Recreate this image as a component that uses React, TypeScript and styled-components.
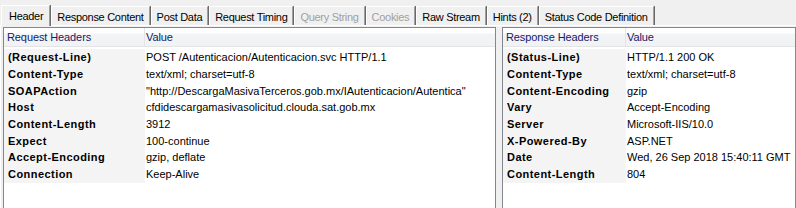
import styled, { createGlobalStyle } from "styled-components";

const GlobalStyle = createGlobalStyle`
  html, body { margin: 0; padding: 0; background: #f0f0f0; overflow: hidden; }
  body {
    font-family: "Liberation Sans", Arial, sans-serif;
    font-size: 11px;
    color: #000;
  }
`;

const tabs = [
  { label: "Header", active: true },
  { label: "Response Content" },
  { label: "Post Data" },
  { label: "Request Timing" },
  { label: "Query String", disabled: true },
  { label: "Cookies", disabled: true },
  { label: "Raw Stream" },
  { label: "Hints (2)" },
  { label: "Status Code Definition" },
];

const requestHeaders: [string, string][] = [
  ["(Request-Line)", "POST /Autenticacion/Autenticacion.svc HTTP/1.1"],
  ["Content-Type", "text/xml; charset=utf-8"],
  ["SOAPAction", "\"http://DescargaMasivaTerceros.gob.mx/IAutenticacion/Autentica\""],
  ["Host", "cfdidescargamasivasolicitud.clouda.sat.gob.mx"],
  ["Content-Length", "3912"],
  ["Expect", "100-continue"],
  ["Accept-Encoding", "gzip, deflate"],
  ["Connection", "Keep-Alive"],
];

const responseHeaders: [string, string][] = [
  ["(Status-Line)", "HTTP/1.1 200 OK"],
  ["Content-Type", "text/xml; charset=utf-8"],
  ["Content-Encoding", "gzip"],
  ["Vary", "Accept-Encoding"],
  ["Server", "Microsoft-IIS/10.0"],
  ["X-Powered-By", "ASP.NET"],
  ["Date", "Wed, 26 Sep 2018 15:40:11 GMT"],
  ["Content-Length", "804"],
];

export default function App() {
  return (
    <Window>
      <GlobalStyle />
      <TabStrip>
        {tabs.map((t) => (
          <Tab key={t.label} $active={t.active} $disabled={t.disabled}>
            {t.label}
          </Tab>
        ))}
      </TabStrip>
      <Page>
        <HeaderList title="Request Headers" rows={requestHeaders} keyWidth={141} width={493} />
        <HeaderList title="Response Headers" rows={responseHeaders} keyWidth={123} />
      </Page>
    </Window>
  );
}

function HeaderList({
  title,
  rows,
  keyWidth,
  width,
}: {
  title: string;
  rows: [string, string][];
  keyWidth: number;
  width?: number;
}) {
  return (
    <Panel $width={width}>
      <ColumnHeader $keyWidth={keyWidth}>
        <HeadCell>{title}</HeadCell>
        <HeadCell>Value</HeadCell>
      </ColumnHeader>
      <Rows>
        {rows.map(([k, v]) => (
          <Row key={k} $keyWidth={keyWidth}>
            <KeyCell>{k}</KeyCell>
            <ValueCell>{v}</ValueCell>
          </Row>
        ))}
      </Rows>
    </Panel>
  );
}

const Window = styled.div`
  width: 796px;
  height: 208px;
  display: flex;
  flex-direction: column;
`;

const TabStrip = styled.div`
  display: flex;
  align-items: flex-end;
  height: 25px;
  padding-left: 1px;
  position: relative;
  z-index: 1;
`;

const Tab = styled.div<{ $active?: boolean; $disabled?: boolean }>`
  height: ${({ $active }) => ($active ? 21 : 19)}px;
  margin-bottom: ${({ $active }) => ($active ? -1 : 0)}px;
  padding: ${({ $active }) => ($active ? "0 6px 0 7px" : "1px 5px 0 5px")};
  display: flex;
  align-items: center;
  box-sizing: border-box;
  background: #f0f0f0;
  border-top: 1px solid #fff;
  border-left: 1px solid #fff;
  border-right: 1px solid #a0a0a0;
  box-shadow: 1px 0 0 #696969;
  margin-right: 1px;
  letter-spacing: -0.3px;
  white-space: nowrap;
  color: ${({ $disabled }) => ($disabled ? "#a0a0a0" : "#000")};
`;

const Page = styled.div`
  flex: 1;
  min-height: 0;
  display: flex;
  gap: 6px;
  padding: 1px 0 0 2px;
  border-top: 1px solid #fff;
  border-left: 1px solid #fff;
`;

const Panel = styled.div<{ $width?: number }>`
  ${({ $width }) => ($width ? `width: ${$width}px; flex: none;` : "flex: 1;")}
  box-sizing: border-box;
  background: #fff;
  border: 1px solid #828790;
  border-bottom: none;
  overflow: hidden;
`;

const ColumnHeader = styled.div<{ $keyWidth: number }>`
  display: grid;
  grid-template-columns: ${({ $keyWidth }) => $keyWidth}px 1fr;
  height: 18px;
  background: linear-gradient(#fff 0%, #fff 30%, #f3f4f6 31%, #f1f2f4 100%);
  border-bottom: 1px solid #e3e4e6;
  color: #14206a;
  letter-spacing: -0.1px;
`;

const HeadCell = styled.div`
  display: flex;
  align-items: center;
  padding-left: 3px;
  border-right: 1px solid #e3e4e6;
  white-space: nowrap;
  &:last-child { border-right: none; padding-left: 1px; }
`;

const Rows = styled.div`
  padding-top: 2px;
`;

const Row = styled.div<{ $keyWidth: number }>`
  display: grid;
  grid-template-columns: ${({ $keyWidth }) => $keyWidth}px 1fr;
  height: 16.7px;
  align-items: stretch;
`;

const KeyCell = styled.div`
  display: flex;
  align-items: center;
  padding-left: 4px;
  background: #f4f4f4;
  font-weight: bold;
  letter-spacing: 0.45px;
  white-space: nowrap;
`;

const ValueCell = styled.div`
  display: flex;
  align-items: center;
  padding-left: 1px;
  letter-spacing: 0;
  white-space: nowrap;
`;
